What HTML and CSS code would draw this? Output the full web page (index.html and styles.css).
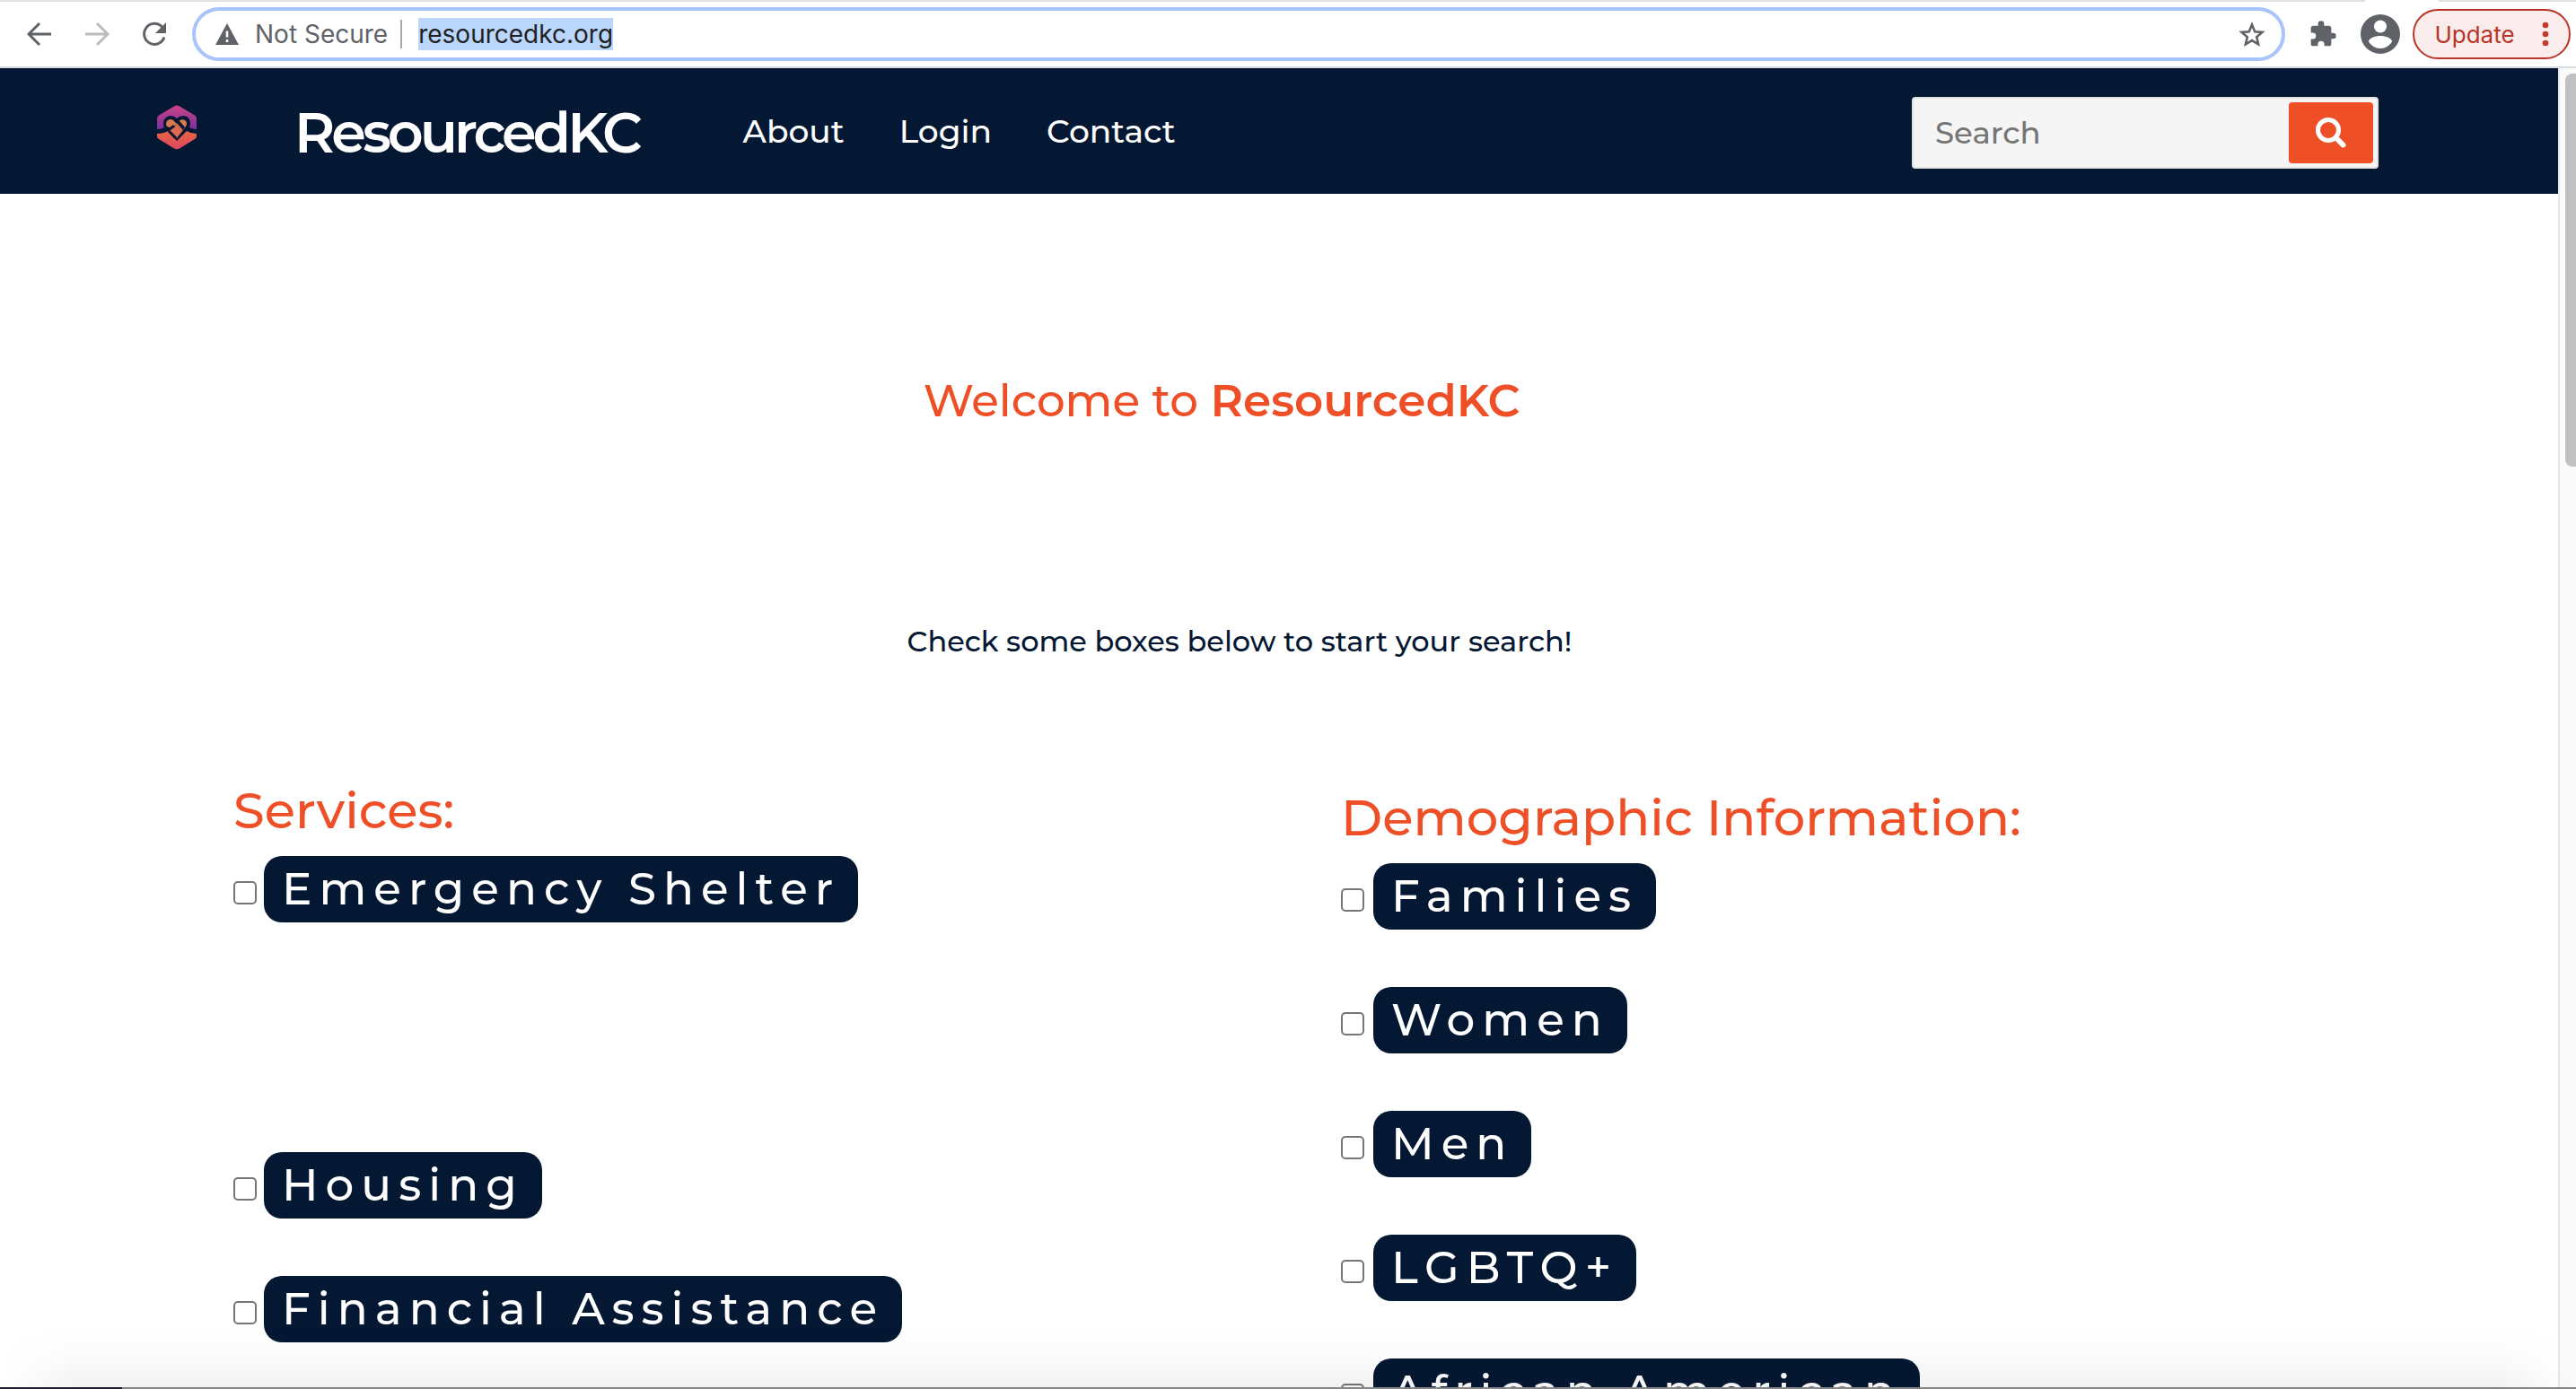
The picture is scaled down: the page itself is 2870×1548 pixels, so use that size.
FILE: index.html
```html
<!DOCTYPE html>
<html lang="en">
<head>
<meta charset="utf-8">
<title>ResourcedKC</title>
<link rel="stylesheet" href="styles.css">
</head>
<body>
<div class="toolbar">
  <div class="tab-gap"></div>
  <button class="tool back" aria-label="Back"><svg width="28" height="28" viewBox="0 0 28 28"><path d="M14 2 2 14l12 12M2 14h25" fill="none" stroke="#5f6368" stroke-width="3"/></svg></button>
  <button class="tool forward" aria-label="Forward"><svg width="28" height="28" viewBox="0 0 28 28"><path d="M14 2l12 12-12 12M26 14H1" fill="none" stroke="#babcbe" stroke-width="3"/></svg></button>
  <button class="tool reload" aria-label="Reload"><svg width="28" height="28" viewBox="0 0 28 28"><path d="M22.500 6A11.500 11.500 0 1 0 25 17.500" fill="none" stroke="#5f6368" stroke-width="3"/><path d="M27 1v12H15z" fill="#5f6368"/></svg></button>
  <div class="omnibox">
    <svg class="warn" width="26" height="24" viewBox="0 0 26 24"><path d="M13 0 26 24H0z" fill="#5f6368"/><path d="M13 8.500v7M13 18v3" stroke="#fff" stroke-width="2.600"/></svg>
    <span class="secure">Not Secure</span>
    <span class="divider"></span>
    <span class="url"><mark>resourcedkc.org</mark></span>
    <button class="star" aria-label="Bookmark"><svg width="30" height="29" viewBox="0 0 30 29"><path d="M15 3.500l3.200 7.700 8.300.7-6.300 5.400 1.900 8.100L15 21.100l-7.100 4.300 1.900-8.100-6.300-5.400 8.300-.7z" fill="none" stroke="#5f6368" stroke-width="2.600"/></svg></button>
  </div>
  <button class="tool ext" aria-label="Extensions"><svg width="32" height="32" viewBox="0 0 24 24"><path d="M20.500 11H19V7a2 2 0 0 0-2-2h-4V3.500a2.500 2.500 0 0 0-5 0V5H4a2 2 0 0 0-2 2v3.800h1.500a2.700 2.700 0 0 1 0 5.400H2V20a2 2 0 0 0 2 2h3.800v-1.500a2.700 2.700 0 0 1 5.400 0V22H17a2 2 0 0 0 2-2v-4h1.500a2.500 2.500 0 0 0 0-5z" fill="#5f6368"/></svg></button>
  <button class="tool profile" aria-label="Profile"><svg width="44" height="44" viewBox="0 0 44 44"><circle cx="22" cy="22" r="22" fill="#5f6368"/><circle cx="22" cy="13.500" r="7" fill="#fff"/><path d="M9 30.500c0-4 7-6.500 13-6.500s13 2.500 13 6.500c-2.500 4-7.500 7.500-13 7.500S11.500 34.500 9 30.500z" fill="#fff"/></svg></button>
  <button class="update"><span>Update</span><svg width="8" height="28" viewBox="0 0 8 28"><g fill="#c5392b"><circle cx="4" cy="4" r="3.300"/><circle cx="4" cy="14" r="3.300"/><circle cx="4" cy="24" r="3.300"/></g></svg></button>
</div>
<div class="viewport">
  <div class="page">
    <header class="site-header">
      <a class="logo" href="#" aria-label="Home"><svg width="46" height="50" viewBox="0 0 46 50"><defs><linearGradient id="top" x1="0" y1="0" x2="0" y2="1"><stop offset="0" stop-color="#cc4488"/><stop offset="1" stop-color="#7c2f9c"/></linearGradient><linearGradient id="low" x1="0" y1="0" x2="0" y2="1"><stop offset="0" stop-color="#e8663f"/><stop offset="1" stop-color="#dc4560"/></linearGradient></defs><path d="M20 1.500q3-2 6 0l17 10q2 1 2 3.500v12q-5 0-8-2c3-7-1-13-7-13q-4 0-7 3-3-3-7-3C10 12 6 19 9 25q-3 2-8 2V15q0-2.500 2-3.500z" fill="url(#top)"/><path d="M1 32q7 0 12-3l10 11 11-11q5 3 11 3v3q0 2-2 3L26 48.500q-3 1.500-6 0L3 38q-2-1-2-3z" fill="url(#low)"/><path d="M12 24c-3-5 2-10 7-7l4 4-5 5zM24 19c4-5 11-3 10 3l-3 5z" fill="#d9774d"/><path d="M23 20l7 8-7 9-9-8 7-5z" fill="#dc6a50"/><path d="M8 29q7-1 12-6M24 18l7 8M14 29l8 8" fill="none" stroke="#051833" stroke-width="3"/></svg></a>
      <a class="brand" href="#">ResourcedKC</a>
      <nav class="links"><a href="#">About</a><a href="#">Login</a><a href="#">Contact</a></nav>
      <form class="search">
        <input type="text" placeholder="Search" aria-label="Search">
        <button type="button" aria-label="Search"><svg width="36" height="36" viewBox="0 0 36 36"><circle cx="15" cy="15" r="11.500" fill="none" stroke="#fff" stroke-width="5"/><path d="M23.500 23.500l8 8" stroke="#fff" stroke-width="6" stroke-linecap="round"/></svg></button>
      </form>
    </header>
    <main>
      <h1>Welcome to <strong>ResourcedKC</strong></h1>
      <p class="hint">Check some boxes below to start your search!</p>
      <form class="filters">
        <section>
          <h2>Services:</h2>
          <div class="row featured"><input type="checkbox" id="shelter"><label for="shelter">Emergency Shelter</label></div>
          <div class="row"><input type="checkbox" id="housing"><label for="housing">Housing</label></div>
          <div class="row"><input type="checkbox" id="finance"><label for="finance">Financial Assistance</label></div>
        </section>
        <section class="demographic">
          <h2>Demographic Information:</h2>
          <div class="row"><input type="checkbox" id="families"><label for="families">Families</label></div>
          <div class="row"><input type="checkbox" id="women"><label for="women">Women</label></div>
          <div class="row"><input type="checkbox" id="men"><label for="men">Men</label></div>
          <div class="row"><input type="checkbox" id="lgbtq"><label for="lgbtq">LGBTQ+</label></div>
          <div class="row"><input type="checkbox" id="african"><label for="african">African American</label></div>
        </section>
      </form>
    </main>
  </div>
  <div class="scrollbar"><div class="thumb"></div></div>
  <div class="shade"></div>
</div>
<div class="desktop-edge"><div class="dock"></div></div>
</body>
</html>
```

FILE: styles.css
```css
* { box-sizing: border-box; }
body {
  margin: 0;
  height: 100vh;
  display: flex;
  flex-direction: column;
  overflow: hidden;
  background: #fff;
  font-family: Montserrat, "Open Sans", sans-serif;
  font-weight: 500;
  color: #051833;
}
button { border: 0; background: none; padding: 0; font: inherit; display: flex; align-items: center; justify-content: center; }
a { color: inherit; text-decoration: none; }
svg { display: block; }

.toolbar {
  position: relative;
  flex: none;
  height: 76px;
  display: flex;
  align-items: center;
  padding: 0 6px 0 30px;
  border-top: 2px solid #dfdfe6;
  border-bottom: 2px solid #dadce0;
  font-family: Inter, Roboto, sans-serif;
  font-weight: 400;
  font-size: 28px;
}
.tab-gap { position: absolute; top: -2px; right: 153px; width: 82px; height: 2px; background: #fff; }
.tool { flex: none; }
.forward, .reload { margin-left: 36px; }
.omnibox {
  flex: 1;
  height: 60px;
  margin-left: 28px;
  padding: 0 18px 0 22px;
  border: 4px solid #a8c4fa;
  border-radius: 30px;
  display: flex;
  align-items: center;
}
.secure { margin-left: 18px; color: #5f6368; }
.divider { width: 2px; height: 32px; margin: 0 18px 0 14px; background: #a6a8ab; }
.url { flex: 1; color: #202124; }
.url mark { background: #bad6fb; color: inherit; line-height: 36px; display: inline-block; }
.ext { margin-left: 26px; }
.profile { margin-left: 26px; }
.update {
  flex: none;
  width: 176px;
  height: 56px;
  margin-left: 14px;
  border: 2px solid #b93427;
  border-radius: 28px;
  background: #faecec;
  color: #b93427;
  font-size: 26px;
  gap: 30px;
}

.viewport { position: relative; flex: 1; min-height: 0; display: flex; overflow: hidden; }
.page { flex: 1; min-width: 0; }
.site-header { height: 140px; display: flex; align-items: center; padding: 4px 200px 0 174px; background: #051833; color: #fff; }
.logo { margin-bottom: 12px; }
.brand { margin-left: 108px; font-size: 62px; line-height: 76px; letter-spacing: -4px; font-weight: 600; }
.links { display: flex; gap: 61px; margin: 0 0 4px 116px; font-size: 36px; }
.search {
  width: 520px;
  height: 80px;
  margin-left: auto;
  display: flex;
  padding: 4px;
  background: #f5f5f5;
  border: 2px solid #e3e3e3;
  border-radius: 4px;
}
.search input { flex: 1; min-width: 0; border: 0; background: none; padding: 0 20px; font: inherit; font-size: 34px; outline: 0; }
.search input::placeholder { color: #757575; opacity: 1; }
.search button { width: 94px; height: 68px; background: #ee4f27; border-radius: 4px; }

h1 { margin: 201px 128px 0 0; font-size: 50px; line-height: 60px; font-weight: 500; text-align: center; color: #ee4f27; }
h1 strong { font-weight: 600; }
.hint { margin: 217px 88px 0 0; font-size: 32px; line-height: 42px; text-align: center; }
.filters { display: grid; grid-template-columns: 1fr 1fr; padding: 130px 122px 0 260px; }
.demographic { padding-top: 8px; }
h2 { margin: 0 0 14px; font-size: 56px; line-height: 74px; font-weight: 500; color: #ee4f27; }
.row { display: flex; align-items: center; height: 74px; margin-bottom: 64px; }
.row.featured { margin-bottom: 256px; }
.row input {
  appearance: none;
  flex: none;
  width: 26px;
  height: 26px;
  margin: 8px 8px 0 0;
  border: 2px solid #767676;
  border-radius: 5px;
  background: #fff;
}
.demographic .row input { margin-right: 10px; }
.row label {
  padding: 0 20px;
  line-height: 74px;
  border-radius: 20px;
  background: #051833;
  color: #fff;
  font-size: 50px;
  letter-spacing: 8px;
}

.scrollbar { width: 20px; padding: 6px 0 0 6px; border-left: 2px solid #e8e8e8; background: #fafafa; }
.thumb { height: 438px; border-radius: 8px 0 0 8px; background: #c1c1c1; }
.shade {
  position: absolute;
  left: 0;
  right: 0;
  bottom: 0;
  height: 70px;
  background: linear-gradient(transparent, rgba(0, 0, 0, .015) 50%, rgba(0, 0, 0, .05));
  mask-image: linear-gradient(90deg, transparent, #000 90px, #000 calc(100% - 90px), transparent);
}
.desktop-edge { flex: none; height: 2px; background: #858585; }
.dock { width: 136px; height: 2px; background: #201b30; }
```
